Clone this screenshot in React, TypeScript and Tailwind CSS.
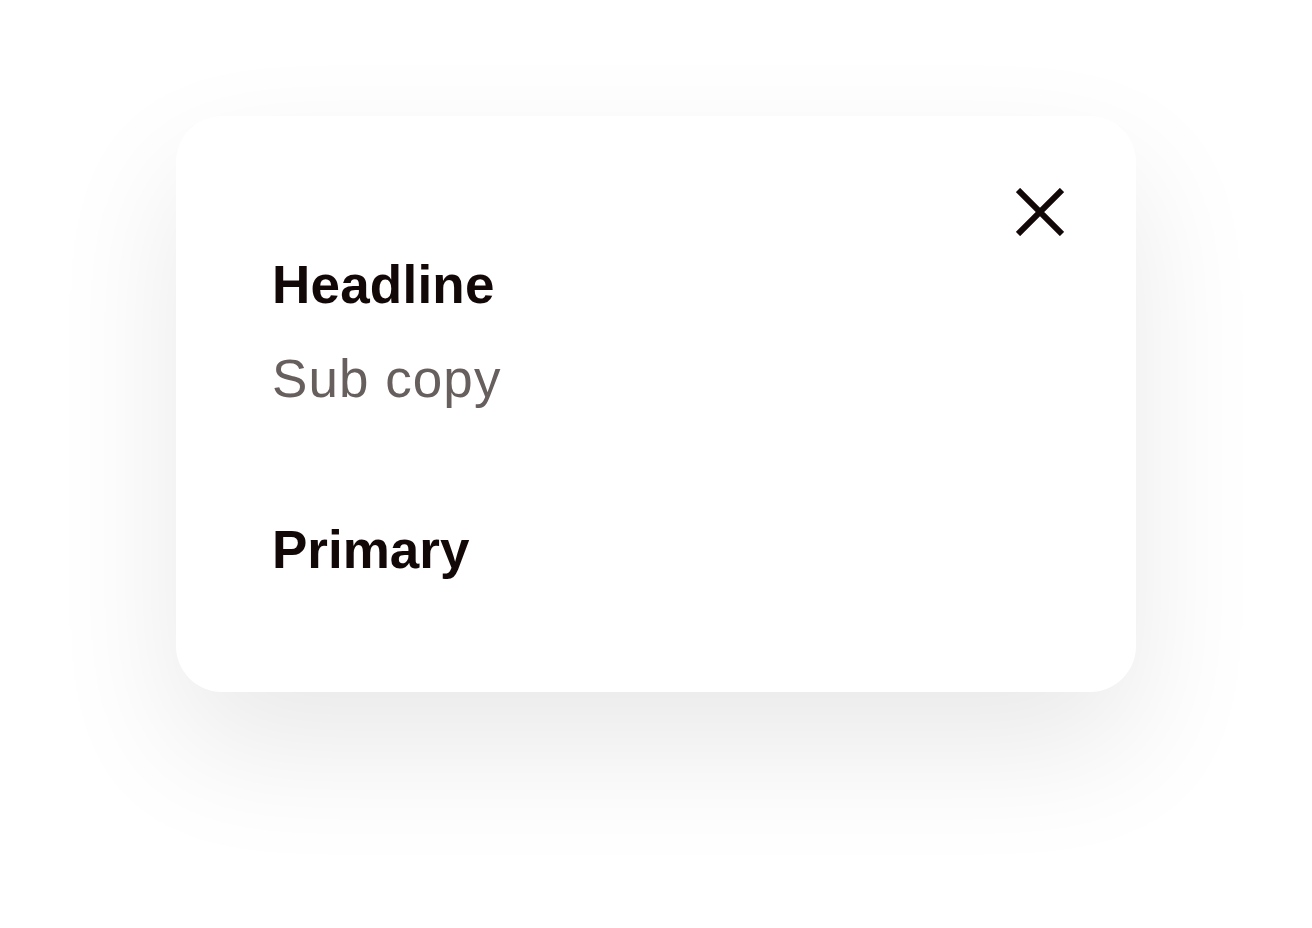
import React from 'react';

const CloseIcon: React.FC = () => (
  <svg width="48" height="48" viewBox="0 0 48 48" fill="none" aria-hidden="true">
    <path d="M2 2L46 46M46 2L2 46" stroke="#130808" strokeWidth="6" />
  </svg>
);

const App: React.FC = () => {
  return (
    <div className="min-h-screen bg-white flex justify-center pt-[116px] font-['Liberation_Sans',Arial,sans-serif]">
      {/* Dialog card */}
      <div className="relative w-[960px] h-[576px] bg-white rounded-[46px] shadow-[0_56px_130px_rgba(0,0,0,0.09)] px-[96px] pt-[137px]">
        <button className="absolute top-[72px] right-[72px] w-12 h-12" aria-label="Close">
          <CloseIcon />
        </button>

        <h1 className="text-[53px] leading-[64px] font-bold text-[#130808] tracking-[0.004em]">Headline</h1>
        <p className="mt-[30px] text-[53px] leading-[64px] text-[#675e5e] tracking-[0.02em]">Sub copy</p>

        <button className="mt-[107px] block text-[53px] leading-[64px] font-bold text-[#130808]">Primary</button>
      </div>
    </div>
  );
};

export default App;
